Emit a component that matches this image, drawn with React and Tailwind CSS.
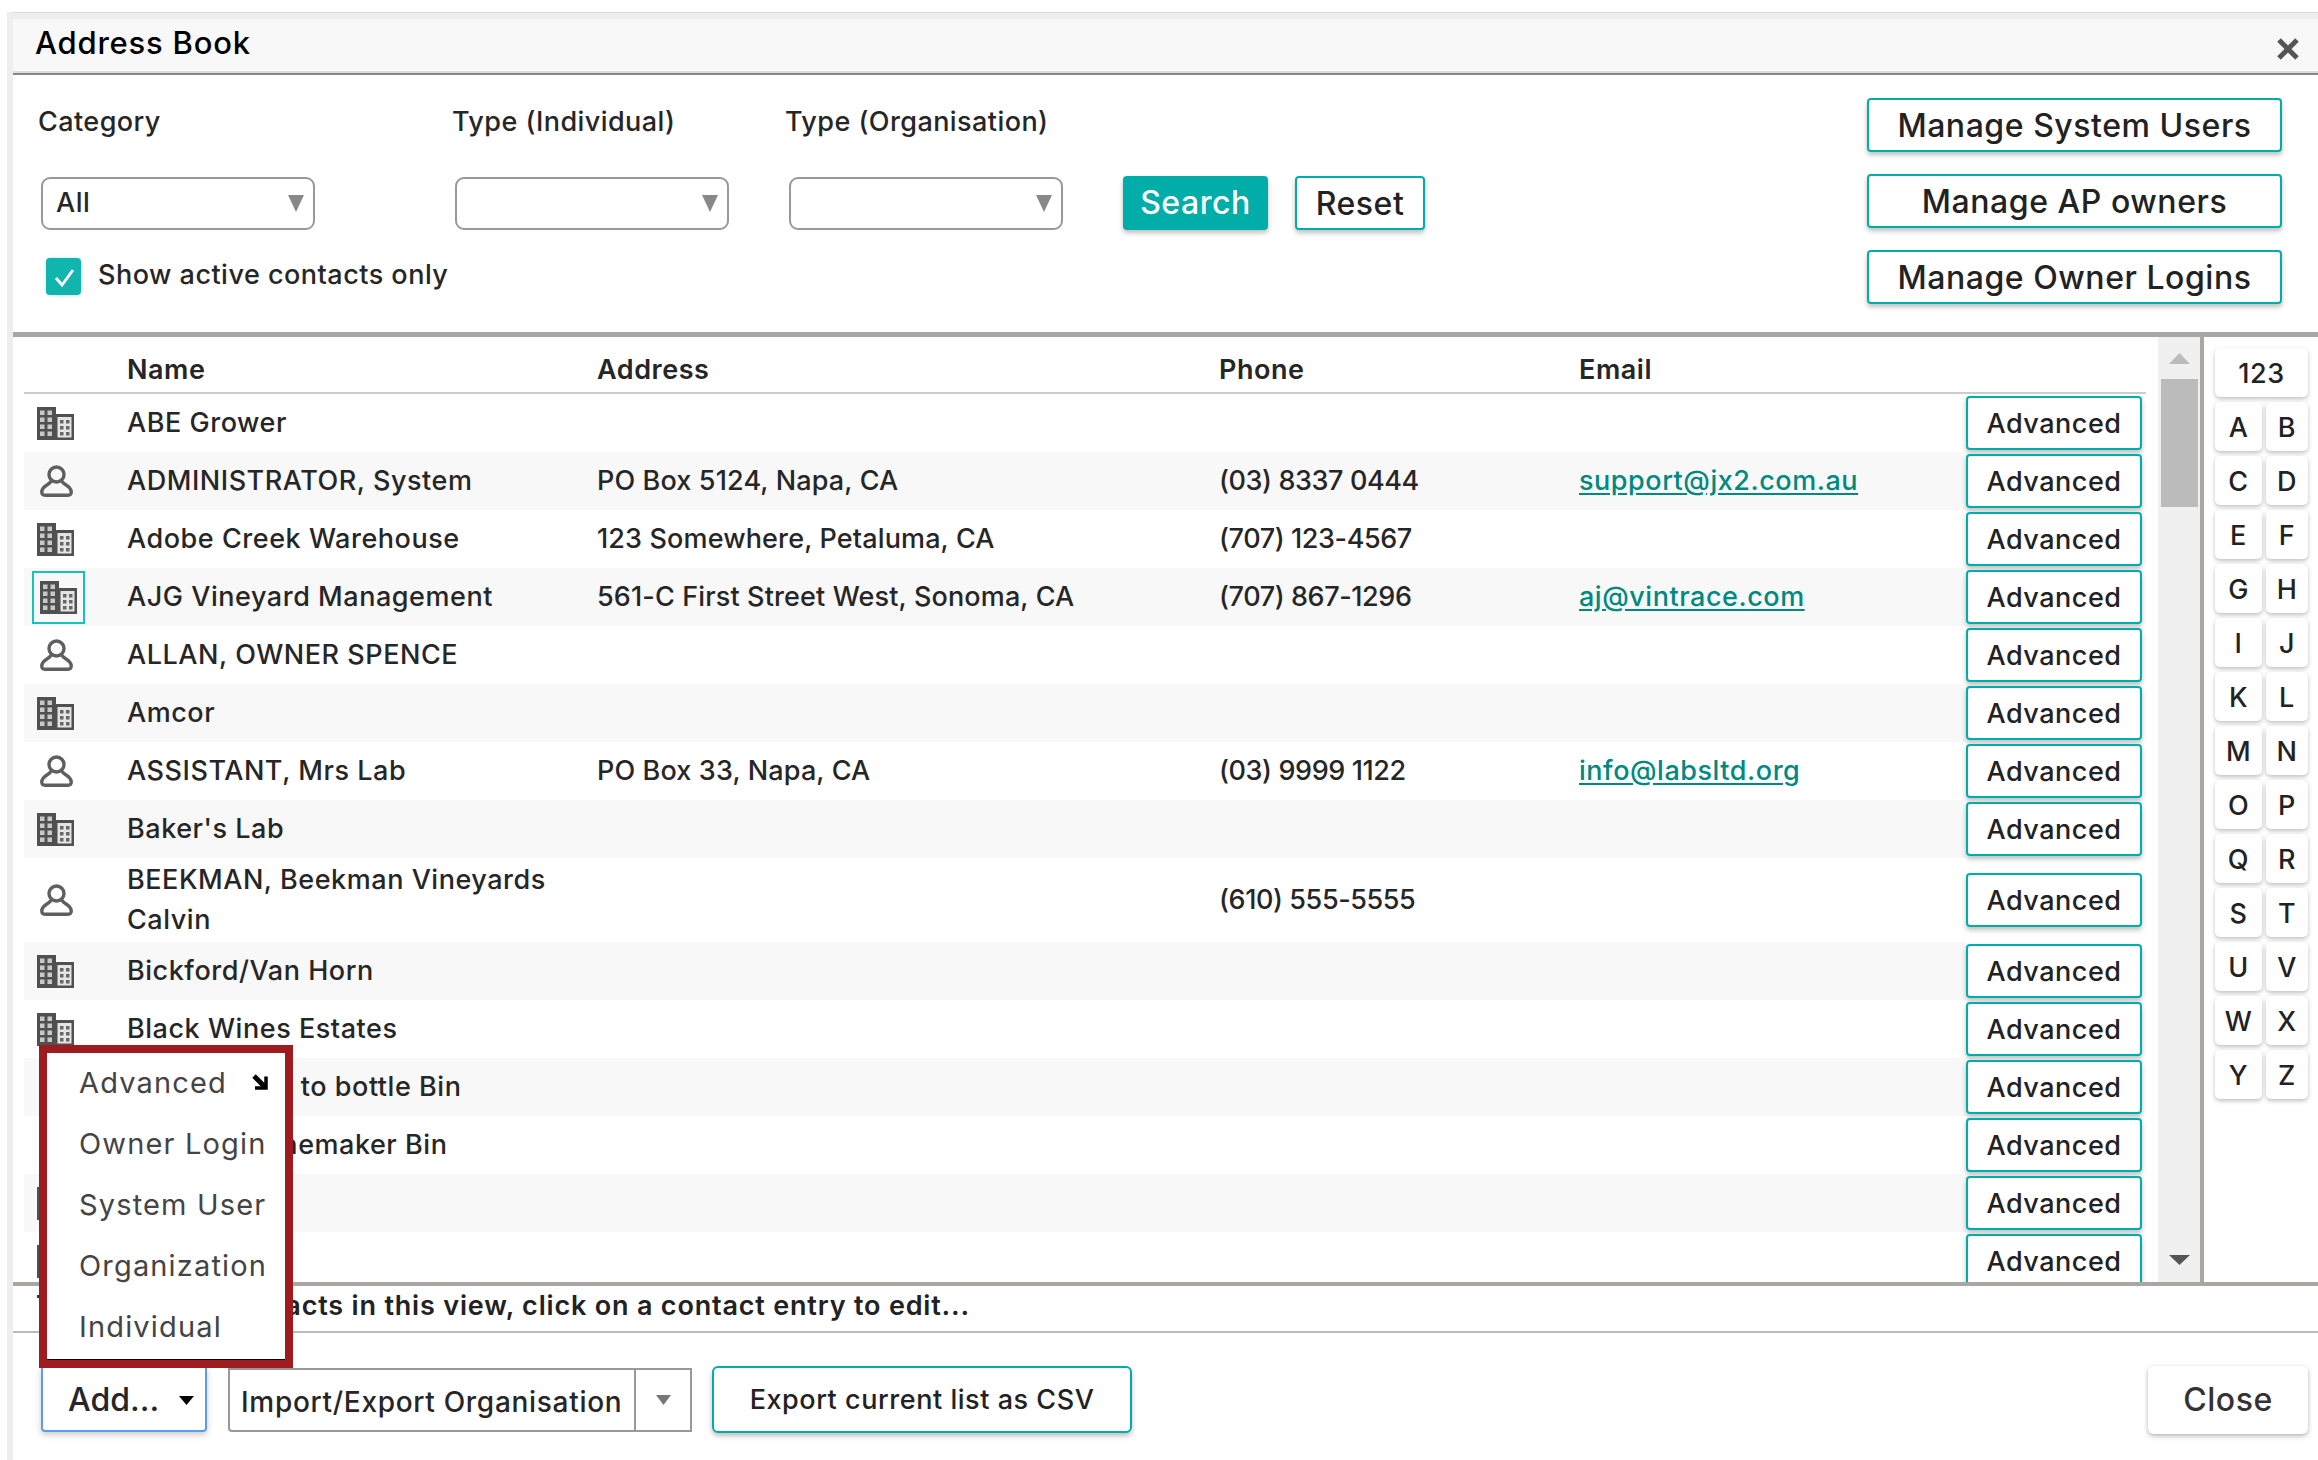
import React from 'react';

const rows = [
  {type: 'org', name: 'ABE Grower'},
  {type: 'person', name: 'ADMINISTRATOR, System', address: 'PO Box 5124, Napa, CA', phone: '(03) 8337 0444', email: 'support@jx2.com.au'},
  {type: 'org', name: 'Adobe Creek Warehouse', address: '123 Somewhere, Petaluma, CA', phone: '(707) 123-4567'},
  {type: 'org', name: 'AJG Vineyard Management', address: '561-C First Street West, Sonoma, CA', phone: '(707) 867-1296', email: 'aj@vintrace.com', focus: true},
  {type: 'person', name: 'ALLAN, OWNER SPENCE'},
  {type: 'org', name: 'Amcor'},
  {type: 'person', name: 'ASSISTANT, Mrs Lab', address: 'PO Box 33, Napa, CA', phone: '(03) 9999 1122', email: 'info@labsltd.org'},
  {type: 'org', name: "Baker's Lab"},
  {type: 'person', name: 'BEEKMAN, Beekman Vineyards Calvin', phone: '(610) 555-5555', tall: true},
  {type: 'org', name: 'Bickford/Van Horn'},
  {type: 'org', name: 'Black Wines Estates'},
  {type: 'person', name: 'Bottled wine to bottle Bin'},
  {type: 'person', name: 'Bottle to Winemaker Bin'},
  {type: 'org', name: 'Bronco'},
  {type: 'org', name: 'Brown'},
];

const letters = ['A','B','C','D','E','F','G','H','I','J','K','L','M','N','O','P','Q','R','S','T','U','V','W','X','Y','Z'];

const BuildingIcon = () => (
  <svg width="37" height="33" viewBox="0 0 37 33" className="block">
    <rect x="0" y="0" width="19" height="33" fill="#505050" />
    <rect x="18" y="7" width="19" height="26" fill="#505050" />
    <rect x="20.5" y="10" width="14" height="20.5" fill="#e4e4e4" />
    {[3.5, 10.5, 17.5, 24.5].map((y) => [3, 10.5].map((x) => (
      <rect key={x + '-' + y} x={x} y={y} width="4.5" height="4.5" fill="#c8c8c8" />
    )))}
    {[13, 19, 25].map((y) => [23, 29].map((x) => (
      <rect key={x + '-' + y} x={x} y={y} width="3.5" height="3.5" fill="#666" />
    )))}
  </svg>
);

const PersonIcon = () => (
  <svg width="33" height="32" viewBox="0 0 33 32" fill="none" stroke="#5f5f5f" strokeWidth="3.4" className="block">
    <circle cx="16.5" cy="9.5" r="7.5" />
    <path d="M11 16 C10 20 2 20 1.8 27 C1.7 29.5 3 30.3 5 30.3 H28 C30 30.3 31.3 29.5 31.2 27 C31 20 23 20 22 16" />
  </svg>
);

const Triangle = ({className}) => (
  <svg viewBox="0 0 10 10" preserveAspectRatio="none" className={className}>
    <path d="M0 0 H10 L5 10 Z" fill="currentColor" />
  </svg>
);

const SelectBox = ({value, className}) => (
  <div className={'flex items-center justify-between w-[274px] h-[53px] border-2 border-[#999] rounded-[9px] pl-[13px] pr-[9px] bg-white ' + className}>
    <span>{value}</span>
    <Triangle className="w-[16px] h-[17px] text-[#888]" />
  </div>
);

const TealButton = ({children, className}) => (
  <button className={'flex items-center justify-center pt-[2px] bg-white border-2 border-[#00ada8] rounded-[4px] shadow-[0_3px_5px_rgba(0,0,0,0.25)] text-[#222] ' + className}>
    {children}
  </button>
);

const Row = ({row, index}) => {
  const stripe = index % 2 === 1 ? 'bg-[#f8f8f8]' : 'bg-white';
  return (
    <div className="flex">
      <div className={'flex items-center w-[1942px] ' + (row.tall ? 'h-[84px] ' : 'h-[58px] ') + stripe}>
        <div className="w-[103px] pl-[13px]">
          {row.focus ? (
            <div className="flex items-center justify-center w-[53px] h-[53px] -ml-[5px] border-2 border-[#12c4bc]">
              <BuildingIcon />
            </div>
          ) : row.type === 'org' ? <BuildingIcon /> : <div className="pl-[3px]"><PersonIcon /></div>}
        </div>
        <div className="w-[470px] pr-[20px] leading-[40px]">{row.name}</div>
        <div className="w-[622px] tracking-[0.005em]">{row.address}</div>
        <div className="w-[360px] tracking-[-0.015em]">{row.phone}</div>
        <div className="w-[387px]">
          {row.email && <a className="text-[#00897f] underline underline-offset-[3px]">{row.email}</a>}
        </div>
      </div>
      <div className={row.tall ? 'flex items-center' : 'flex items-start'}>
        <TealButton className={'w-[176px] h-[54px] shrink-0 ' + (row.tall ? '' : 'mt-[2px]')}>Advanced</TealButton>
      </div>
    </div>
  );
};

const LetterKey = ({children, className}) => (
  <button className={'flex items-center justify-center h-[49px] pt-[3px] bg-white rounded-[5px] shadow-[0_2px_4px_rgba(0,0,0,0.25)] text-[#222] ' + className}>
    {children}
  </button>
);

export default function App() {
  return (
    <div className="relative w-[2318px] h-[1460px] bg-white overflow-hidden font-['Inter',sans-serif] text-[27px] font-medium tracking-[0.02em] text-[#262626]">
      <div className="ml-[7px] pt-[12px] h-full">
        <div className="flex flex-col h-full border-l-[6px] border-[#eeeeee]">
          <div className="h-[7px] bg-[#eeeeee] border-t border-[#dddddd]" />

          {/* title */}
          <div className="flex items-center justify-between h-[56px] bg-[#f8f8f8] border-b-2 border-[#888] shadow-[inset_0_-2px_0_#dddddd] pl-[22px] pr-[18px]">
            <span className="text-[31px] font-medium text-black tracking-[0.025em] -mt-[6px]">Address Book</span>
            <svg width="24" height="22" viewBox="0 0 24 22" className="mt-[6px]">
              <path d="M3 2 L21 20 M21 2 L3 20" stroke="#555" strokeWidth="5" />
            </svg>
          </div>

          {/* search filters */}
          <div className="flex justify-between h-[262px] shrink-0 border-b-[5px] border-[#aaa6a3] pr-[36px]">
            <div className="pl-[25px]">
              <div className="flex h-[101px] pt-[27px] tracking-[0.016em]">
                <div className="w-[414px]">Category</div>
                <div className="w-[333px]">Type (Individual)</div>
                <div>Type (Organisation)</div>
              </div>
              <div className="flex items-center">
                <SelectBox value="All" className="ml-[3px]" />
                <SelectBox value="" className="ml-[140px]" />
                <SelectBox value="" className="ml-[60px]" />
                <button className="flex items-center justify-center w-[145px] h-[54px] ml-[60px] bg-[#00ada8] rounded-[4px] text-white text-[32px] font-medium shadow-[0_3px_5px_rgba(0,0,0,0.25)]">Search</button>
                <TealButton className="w-[130px] h-[54px] ml-[27px] text-[32px]">Reset</TealButton>
              </div>
              <div className="flex items-center mt-[28px]">
                <div className="flex items-center justify-center w-[35px] h-[37px] ml-[8px] bg-[#12b5ad] rounded-[4px] shadow-[0_0_3px_#9fe3df]">
                  <svg width="24" height="24" viewBox="0 0 24 24" fill="none" stroke="#fff" strokeWidth="2.8"><path d="M4 13 L10 20 L21 5" /></svg>
                </div>
                <span className="ml-[17px] -mt-[3px] tracking-[0.018em]">Show active contacts only</span>
              </div>
            </div>
            <div className="flex flex-col gap-[22px] pt-[23px]">
              <TealButton className="w-[415px] h-[54px] text-[32px]">Manage System Users</TealButton>
              <TealButton className="w-[415px] h-[54px] text-[32px]">Manage AP owners</TealButton>
              <TealButton className="w-[415px] h-[54px] text-[32px]">Manage Owner Logins</TealButton>
            </div>
          </div>

          {/* contact list */}
          <div className="flex h-[945px] shrink-0 overflow-hidden">
            <div className="w-[2145px] pl-[11px] shrink-0">
              <div className="flex items-center w-[2122px] h-[57px] border-b-2 border-[#cccccc] font-semibold pt-[11px]">
                <div className="w-[103px]" />
                <div className="w-[470px]">Name</div>
                <div className="w-[622px]">Address</div>
                <div className="w-[360px]">Phone</div>
                <div>Email</div>
              </div>
              {rows.map((row, i) => <Row key={row.name} row={row} index={i} />)}
            </div>

            <div className="relative flex flex-col items-center w-[42px] h-full bg-[#f0f0f0] shrink-0">
              <Triangle className="rotate-180 w-[21px] h-[11px] mt-[16px] text-[#bbbbbb]" />
              <div className="w-[37px] h-[128px] mt-[15px] bg-[#bbbbbb]" />
              <Triangle className="absolute bottom-[17px] w-[21px] h-[10px] text-[#555555]" />
            </div>

            <div className="w-[118px] border-l-4 border-[#aaa6a3] pl-[11px] pt-[11px] shrink-0">
              <LetterKey className="w-[93px]">123</LetterKey>
              <div className="grid grid-cols-[47px_42px] gap-x-[4px] gap-y-[5px] mt-[5px]">
                {letters.map((l) => <LetterKey key={l}>{l}</LetterKey>)}
              </div>
            </div>
          </div>

          {/* status line */}
          <div className="flex items-center h-[51px] shrink-0 border-t-4 border-b-2 border-t-[#aaa6a3] border-b-[#bbbbbb] pl-[23px] pb-[4px] font-semibold text-[27px] text-[#222] tracking-[0.03em] whitespace-pre">
            <span className="mr-[5px]">There are 52</span> contacts in this view, click on a contact entry to edit...
          </div>

          {/* footer buttons */}
          <div className="flex items-start justify-between pt-[33px] pl-[28px] pr-[10px]">
            <div className="flex items-start">
              <button className="flex items-center justify-between w-[166px] h-[66px] pt-[2px] border-2 border-[#5a9cf0] rounded-b-[4px] shadow-[0_3px_6px_rgba(0,0,0,0.2)] pl-[25px] pr-[11px] text-[32px] tracking-[0]">
                Add...
                <Triangle className="w-[15px] h-[9px] text-black" />
              </button>
              <div className="flex items-center w-[464px] h-[64px] ml-[21px] mt-[2px] border-2 border-[#999] rounded-bl-[4px] text-[28px]">
                <span className="w-[406px] pl-[11px] pt-[3px] h-full flex items-center border-r-2 border-[#999] whitespace-nowrap tracking-[0.025em]">Import/Export Organisation</span>
                <div className="flex-1 flex justify-center">
                  <Triangle className="w-[15px] h-[10px] text-[#777]" />
                </div>
              </div>
              <TealButton className="w-[420px] h-[67px] ml-[20px] rounded-[6px]">Export current list as CSV</TealButton>
            </div>
            <button className="flex items-center justify-center w-[160px] h-[68px] bg-white rounded-[6px] shadow-[0_2px_5px_rgba(0,0,0,0.3)] text-[32px] text-[#333]">Close</button>
          </div>
        </div>
      </div>

      {/* add menu */}
      <div className="absolute left-[39px] top-[1045px] flex flex-col w-[254px] h-[323px] border-8 border-[#9e1b20] bg-white text-[29px] font-normal text-[#444] tracking-[0.04em] shadow-[inset_0_-1px_0_#000]">
        <div className="flex items-center justify-between h-[61px] pl-[32px] pr-[17px] -mt-[1px]">
          Advanced
          <svg width="16" height="16" viewBox="0 0 16 16" fill="none" stroke="#000" className="-mt-[2px]">
            <path d="M2 2 L13 13" strokeWidth="5" />
            <path d="M14 2.5 V14 H3" strokeWidth="3.5" />
          </svg>
        </div>
        <div className="flex items-center h-[61px] pl-[32px] whitespace-nowrap">Owner Login</div>
        <div className="flex items-center h-[61px] pl-[32px]">System User</div>
        <div className="flex items-center h-[61px] pl-[32px]">Organization</div>
        <div className="flex items-center h-[61px] pl-[32px]">Individual</div>
      </div>
    </div>
  );
}
